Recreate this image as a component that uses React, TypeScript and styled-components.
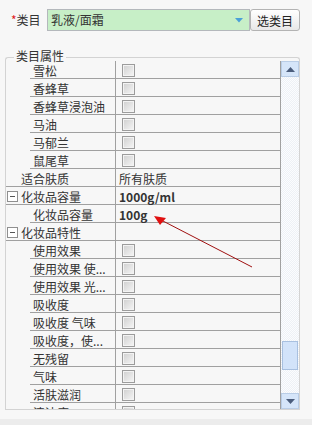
import React from "react";
import styled, { createGlobalStyle } from "styled-components";

const GlobalStyle = createGlobalStyle`
  html, body { margin: 0; padding: 0; background: #f7f7f7; }
  body {
    font-family: "Noto Sans CJK SC", "Microsoft YaHei", sans-serif;
    font-size: 12px;
    color: #333;
  }
  * { box-sizing: border-box; }
`;

const Page = styled.div`
  position: relative;
  width: 312px;
  height: 425px;
  overflow: hidden;
  display: flex;
  flex-direction: column;
  background: #f7f7f7;
`;

const TopRow = styled.div`
  display: flex;
  align-items: center;
  height: 22px;
  margin-top: 9px;
  padding-left: 11px;
`;

const FieldLabel = styled.label`
  width: 36px;
  font-size: 12px;
  line-height: 22px;
  color: #333;
`;

const Star = styled.span`
  color: #e02020;
`;

const Select = styled.div`
  width: 203px;
  height: 22px;
  border: 1px solid #b4b8bc;
  background: #c7efc7;
  display: flex;
  align-items: center;
  padding: 0 6px 0 3px;
`;

const SelectText = styled.span`
  flex: 1;
  font-size: 12px;
  line-height: 20px;
  color: #333;
`;

const PickButton = styled.button`
  width: 50px;
  height: 22px;
  margin: 0;
  padding: 0;
  border: 1px solid #b3b3b3;
  border-radius: 3px;
  background: linear-gradient(#ffffff, #e8e8e8);
  font-family: inherit;
  font-size: 12px;
  color: #222;
`;

const Group = styled.section`
  margin: 19px 0 0 5px;
  width: 295px;
  display: flex;
  flex-direction: column;
`;

const GroupHead = styled.div`
  display: flex;
  height: 11px;
`;

const HeadEdge = styled.div<{ $side: "left" | "right" }>`
  margin-top: 7px;
  border-top: 1px solid #d3d3d3;
  ${(p) =>
    p.$side === "left"
      ? `width: 9px; border-left: 1px solid #d3d3d3; border-top-left-radius: 3px;`
      : `flex: 1; border-right: 1px solid #d3d3d3; border-top-right-radius: 3px;`}
`;

const Legend = styled.span`
  padding: 0 2px;
  font-size: 12px;
  line-height: 11px;
  color: #333;
  white-space: nowrap;
`;

const GroupBody = styled.div`
  display: flex;
  height: 349px;
  border: 1px solid #d3d3d3;
  border-top: none;
`;

const Viewport = styled.div`
  width: 275px;
  height: 348px;
  overflow: hidden;
  border-right: 1px solid #a0a0a0;
`;

const Row = styled.div`
  display: grid;
  grid-template-columns: 109px 1fr;
  height: 18px;
`;

const NameCell = styled.div<{ $level: number }>`
  display: flex;
  padding-left: ${(p) => p.$level * 24}px;
`;

const NameBody = styled.div<{ $level: number }>`
  flex: 1;
  display: flex;
  align-items: center;
  padding-top: 2px;
  padding-left: ${(p) => (p.$level === 0 ? 1 : 3)}px;
  border-bottom: 1px solid #a0a0a0;
  white-space: nowrap;
  overflow: hidden;
  line-height: 15px;
`;

const ExpanderSlot = styled.span`
  width: 14px;
  height: 11px;
  flex: none;
  display: flex;
`;

const Expander = styled.span`
  width: 11px;
  height: 11px;
  border: 1px solid #8f8f8f;
  background: #fff;
  display: flex;
  align-items: center;
  justify-content: center;
  &::after {
    content: "";
    width: 5px;
    height: 1px;
    background: #555;
  }
`;

const ValueCell = styled.div`
  display: flex;
  align-items: center;
  padding-top: 2px;
  padding-left: 3px;
  border-left: 1px solid #a0a0a0;
  border-bottom: 1px solid #a0a0a0;
  line-height: 15px;
  white-space: nowrap;
`;

const ValueText = styled.span<{ $bold?: boolean }>`
  font-weight: ${(p) => (p.$bold ? 700 : 400)};
  color: #333;
`;

const Check = styled.span`
  width: 13px;
  height: 13px;
  margin-left: 3px;
  border: 1px solid #9c9c9c;
  background: linear-gradient(135deg, #cfcfcf 0%, #f6f6f6 100%);
  box-shadow: inset 0 0 0 1px #f3f3f3;
`;

const Scrollbar = styled.div`
  width: 18px;
  height: 348px;
  display: flex;
  flex-direction: column;
  background: repeating-conic-gradient(#edf1f6 0 25%, #fbfcfe 0 50%) 0 0 / 2px 2px;
`;

const ScrollButton = styled.div`
  height: 16px;
  flex: none;
  display: flex;
  align-items: center;
  justify-content: center;
  background: #d5e5f9;
  border: 1px solid #b9cde6;
`;

const Track = styled.div`
  flex: 1;
  display: flex;
  flex-direction: column;
`;

const Thumb = styled.div<{ $offset: number }>`
  margin: ${(p) => p.$offset}px 1px 0 1px;
  height: 29px;
  background: #d2e3fa;
  border: 1px solid #a8c0e0;
`;

const BottomStrip = styled.div`
  margin-top: auto;
  height: 6px;
  background: #ececec;
`;

const Annotation = styled.svg`
  position: absolute;
  left: 0;
  top: 0;
  pointer-events: none;
`;

type Item = {
  label: string;
  level: number;
  group?: boolean;
  value?: string;
  bold?: boolean;
  check?: boolean;
};

const items: Item[] = [
  { label: "雪松", level: 1, check: true },
  { label: "香蜂草", level: 1, check: true },
  { label: "香蜂草浸泡油", level: 1, check: true },
  { label: "马油", level: 1, check: true },
  { label: "马郁兰", level: 1, check: true },
  { label: "鼠尾草", level: 1, check: true },
  { label: "适合肤质", level: 0, value: "所有肤质" },
  { label: "化妆品容量", level: 0, group: true, value: "1000g/ml", bold: true },
  { label: "化妆品容量", level: 1, value: "100g", bold: true },
  { label: "化妆品特性", level: 0, group: true },
  { label: "使用效果", level: 1, check: true },
  { label: "使用效果 使...", level: 1, check: true },
  { label: "使用效果 光...", level: 1, check: true },
  { label: "吸收度", level: 1, check: true },
  { label: "吸收度 气味", level: 1, check: true },
  { label: "吸收度，使...", level: 1, check: true },
  { label: "无残留", level: 1, check: true },
  { label: "气味", level: 1, check: true },
  { label: "活肤滋润", level: 1, check: true },
  { label: "清洁度", level: 1, check: true },
];

function Caret() {
  return (
    <svg width="8" height="5" viewBox="0 0 8 5">
      <polygon points="0,0 8,0 4,4.5" fill="#4a9fd8" />
    </svg>
  );
}

function Arrow({ up }: { up: boolean }) {
  return (
    <svg width="9" height="5" viewBox="0 0 9 5">
      <polygon points={up ? "0,5 9,5 4.5,0" : "0,0 9,0 4.5,5"} fill="#4b5d7c" />
    </svg>
  );
}

export default function App() {
  return (
    <Page>
      <GlobalStyle />
      <TopRow>
        <FieldLabel>
          <Star>*</Star>类目
        </FieldLabel>
        <Select>
          <SelectText>乳液/面霜</SelectText>
          <Caret />
        </Select>
        <PickButton>选类目</PickButton>
      </TopRow>

      <Group>
        <GroupHead>
          <HeadEdge $side="left" />
          <Legend>类目属性</Legend>
          <HeadEdge $side="right" />
        </GroupHead>
        <GroupBody>
          <Viewport>
            {items.map((it, i) => (
              <Row key={i}>
                <NameCell $level={it.level}>
                  <NameBody $level={it.level}>
                    {it.level === 0 && <ExpanderSlot>{it.group && <Expander />}</ExpanderSlot>}
                    {it.label}
                  </NameBody>
                </NameCell>
                <ValueCell>
                  {it.check && <Check />}
                  {it.value && <ValueText $bold={it.bold}>{it.value}</ValueText>}
                </ValueCell>
              </Row>
            ))}
          </Viewport>
          <Scrollbar>
            <ScrollButton>
              <Arrow up />
            </ScrollButton>
            <Track>
              <Thumb $offset={264} />
            </Track>
            <ScrollButton>
              <Arrow up={false} />
            </ScrollButton>
          </Scrollbar>
        </GroupBody>
      </Group>

      <BottomStrip />

      <Annotation width="312" height="425" viewBox="0 0 312 425">
        <line x1="252" y1="267" x2="161" y2="220" stroke="#a01010" strokeWidth="1" />
        <polygon points="154,216 166,218 160,225" fill="#e01010" />
      </Annotation>
    </Page>
  );
}
